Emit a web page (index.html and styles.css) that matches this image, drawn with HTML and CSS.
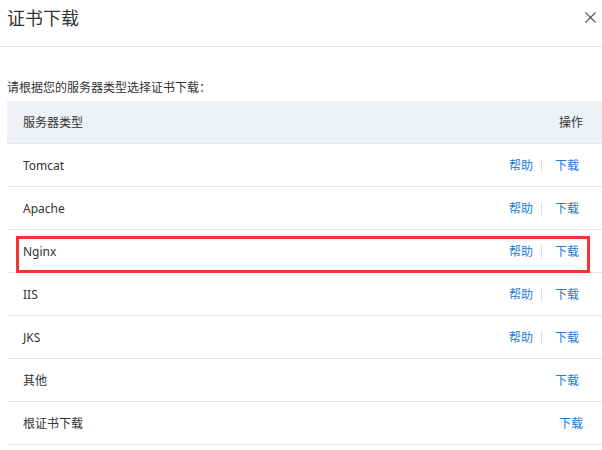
FILE: index.html
```html
<!DOCTYPE html>
<html lang="zh-CN">
<head>
    <meta charset="UTF-8">
    <meta name="viewport" content="width=device-width, initial-scale=1.0">
    <title>证书下载</title>
    <link rel="stylesheet" href="styles.css">
</head>
<body>

<div class="dialogHeader">
    <h1 class="dialogTitle">证书下载</h1>
    <span class="closeBtn">
        <svg width="11" height="11" viewBox="0 0 11 11"><path d="M0.5 0.5 L10.5 10.5 M10.5 0.5 L0.5 10.5" stroke="#555" stroke-width="1.1" fill="none"/></svg>
    </span>
</div>

<p class="intro">请根据您的服务器类型选择证书下载：</p>

<div class="serverTable">
    <div class="row headRow">
        <span class="name">服务器类型</span>
        <span class="ops">操作</span>
    </div>
    <div class="row">
        <span class="name">Tomcat</span>
        <span class="ops"><a>帮助</a><i class="sep"></i><a>下载</a></span>
    </div>
    <div class="row">
        <span class="name">Apache</span>
        <span class="ops"><a>帮助</a><i class="sep"></i><a>下载</a></span>
    </div>
    <div class="row marked">
        <span class="name">Nginx</span>
        <span class="ops"><a>帮助</a><i class="sep"></i><a>下载</a></span>
        <span class="highlight"></span>
    </div>
    <div class="row">
        <span class="name">IIS</span>
        <span class="ops"><a>帮助</a><i class="sep"></i><a>下载</a></span>
    </div>
    <div class="row">
        <span class="name">JKS</span>
        <span class="ops"><a>帮助</a><i class="sep"></i><a>下载</a></span>
    </div>
    <div class="row">
        <span class="name">其他</span>
        <span class="ops"><a>下载</a></span>
    </div>
    <div class="row lastRow">
        <span class="name">根证书下载</span>
        <span class="ops"><a>下载</a></span>
    </div>
</div>

</body>
</html>
```

FILE: styles.css
```css
body {
    margin: 0;
    font-family: "Noto Sans", "Noto Sans CJK SC", sans-serif;
    font-size: 12px;
    color: #333;
    background: #fff;
}

.dialogHeader {
    height: 46px;
    border-bottom: 1px solid #e6e6e6;
    display: flex;
    justify-content: space-between;
    padding-left: 7px;
}

.dialogTitle {
    margin: 8px 0 0 0;
    font-size: 18px;
    line-height: 18px;
    font-weight: normal;
    color: #333;
    font-family: "Noto Sans CJK SC", sans-serif;
}

.closeBtn {
    margin: 12px 6px 0 0;
    line-height: 0;
}

.intro {
    margin: 32px 0 6px 7px;
    line-height: 16px;
    color: #333;
    font-family: "Noto Sans CJK SC", sans-serif;
}

.serverTable {
    margin-left: 7px;
}

.row {
    position: relative;
    height: 42px;
    border-bottom: 1px solid #e6e6e6;
    display: flex;
    align-items: center;
    justify-content: space-between;
    padding: 0 23px 0 16px;
}

.headRow {
    background-color: #eef1f6;
    padding-right: 19px;
}

.lastRow {
    padding-right: 19px;
}

.ops {
    display: flex;
    align-items: center;
}

.ops a {
    color: #1c7bd6;
    cursor: pointer;
}

.sep {
    display: inline-block;
    width: 1px;
    height: 13px;
    background-color: #dcdcdc;
    margin: 0 13px 0 8px;
}

.highlight {
    position: absolute;
    top: 6px;
    left: 9px;
    right: 12px;
    bottom: -1px;
    border: 3px solid #f73434;
}
```
